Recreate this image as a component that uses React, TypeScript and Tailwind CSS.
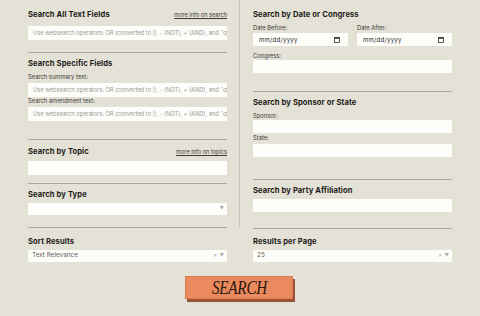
import React from 'react';

const placeholder = 'Use websearch operators: OR (converted to |), - (NOT), + (AND), and "quoted phrases"';

const Heading = ({ children, link }: { children: React.ReactNode; link?: string }) => (
    <div className="flex items-center justify-between h-[10px]">
        <h2 className="text-[7.6px] leading-[10px] font-bold text-[#1c1b18] tracking-[0.1px]">{children}</h2>
        {link && (
            <a className="text-[5.6px] leading-[8px] text-[#3a3935] underline underline-offset-[1px]">{link}</a>
        )}
    </div>
);

const Label = ({ children, className = '' }: { children: React.ReactNode; className?: string }) => (
    <div className={`text-[5.8px] leading-[8px] text-[#3d3c37] ${className}`}>{children}</div>
);

const TextBox = ({ text, tall = false, className = '' }: { text?: string; tall?: boolean; className?: string }) => (
    <div className={`${tall ? 'h-[14px]' : 'h-[13px]'} bg-[#fdfdfa] rounded-[1px] flex items-center px-[5px] overflow-hidden ${className}`}>
        {text && <span className="text-[5.7px] text-[#9c9b96] whitespace-nowrap">{text}</span>}
    </div>
);

const DateBox = () => (
    <div className="flex-1 h-[13px] bg-[#fdfdfa] rounded-[1px] flex items-center justify-between pl-[6px] pr-[8px]">
        <span className="text-[6px] text-[#2b2a27] tracking-[0.3px]">mm/dd/yyyy</span>
        <svg width="6" height="6" viewBox="0 0 6 6">
            <rect x="0.5" y="0.5" width="5" height="5" fill="none" stroke="#333" strokeWidth="0.8" />
            <rect x="0.5" y="0.5" width="5" height="1.3" fill="#333" />
        </svg>
    </div>
);

const SelectBox = ({ value, clear }: { value?: string; clear?: boolean }) => (
    <div className="h-[12px] bg-[#fdfdfa] rounded-[1px] flex items-center justify-between pl-[4px] pr-[3px]">
        <span className="text-[6.4px] text-[#5f5e59]">{value}</span>
        <span className="flex items-center gap-[2px] text-[#aaa9a4] text-[4.5px]">
            {clear && <span className="text-[5px]">✕</span>}
            <span>▼</span>
        </span>
    </div>
);

const Divider = () => <div className="h-px bg-[#a9a69c]" />;

export default function App() {
    return (
        <div className="w-[480px] h-[316px] overflow-hidden bg-[#e4e1d7] px-[28px]" style={{ fontFamily: 'Inter, "Liberation Sans", sans-serif' }}>
            <div className="grid grid-cols-2 items-start">
                {/* Left column */}
                <div className="border-r border-[#c9c6bb] pr-[12px] flex flex-col">
                    <div className="pt-[10px] pb-[12px]">
                        <Heading link="more info on search">Search All Text Fields</Heading>
                        <TextBox tall className="mt-[6px]" text={placeholder} />
                    </div>
                    <Divider />
                    <div className="pt-[6px] pb-[18px]">
                        <Heading>Search Specific Fields</Heading>
                        <Label className="mt-[4px]">Search summary text:</Label>
                        <TextBox tall className="mt-[2px]" text={placeholder} />
                        <Label>Search amendment text:</Label>
                        <TextBox tall className="mt-[2px]" text={placeholder} />
                    </div>
                    <Divider />
                    <div className="pt-[7px] pb-[8px]">
                        <Heading link="more info on topics">Search by Topic</Heading>
                        <TextBox tall className="mt-[4px]" />
                    </div>
                    <Divider />
                    <div className="pt-[6px] pb-[12px]">
                        <Heading>Search by Type</Heading>
                        <div className="mt-[3px]">
                            <SelectBox />
                        </div>
                    </div>
                    <Divider />
                </div>

                {/* Right column */}
                <div className="pl-[13px] flex flex-col">
                    <div className="pt-[10px] pb-[18px]">
                        <Heading>Search by Date or Congress</Heading>
                        <div className="flex gap-[9px] mt-[4px]">
                            <div className="flex-1 flex flex-col">
                                <Label>Date Before:</Label>
                                <div className="flex mt-[1px]"><DateBox /></div>
                            </div>
                            <div className="flex-1 flex flex-col">
                                <Label>Date After:</Label>
                                <div className="flex mt-[1px]"><DateBox /></div>
                            </div>
                        </div>
                        <Label className="mt-[6px]">Congress:</Label>
                        <TextBox />
                    </div>
                    <Divider />
                    <div className="pt-[6px] pb-[22px]">
                        <Heading>Search by Sponsor or State</Heading>
                        <Label className="mt-[4px]">Sponsor:</Label>
                        <TextBox />
                        <Label className="mt-[1px]">State:</Label>
                        <TextBox className="mt-[2px]" />
                    </div>
                    <Divider />
                    <div className="pt-[6px] pb-[16px]">
                        <Heading>Search by Party Affiliation</Heading>
                        <TextBox className="mt-[3px]" />
                    </div>
                    <Divider />
                </div>
            </div>

            {/* Sort row */}
            <div className="grid grid-cols-2">
                <div className="pr-[13px] pt-[8px]">
                    <Heading>Sort Results</Heading>
                    <div className="mt-[3px]">
                        <SelectBox value="Text Relevance" clear />
                    </div>
                </div>
                <div className="pl-[13px] pt-[8px]">
                    <Heading>Results per Page</Heading>
                    <div className="mt-[3px]">
                        <SelectBox value="25" clear />
                    </div>
                </div>
            </div>

            <div className="flex justify-center mt-[14px] pr-[2px]">
                <button className="w-[108px] h-[23px] bg-[#ea8a5e] border border-[#d97a50] shadow-[2px_3px_0_#9c5436] flex items-center justify-center">
                    <span className="text-[19px] italic text-[#2a170f] tracking-[-0.3px] scale-x-[0.8] leading-none" style={{ fontFamily: '"Liberation Serif", serif' }}>SEARCH</span>
                </button>
            </div>
        </div>
    );
}
